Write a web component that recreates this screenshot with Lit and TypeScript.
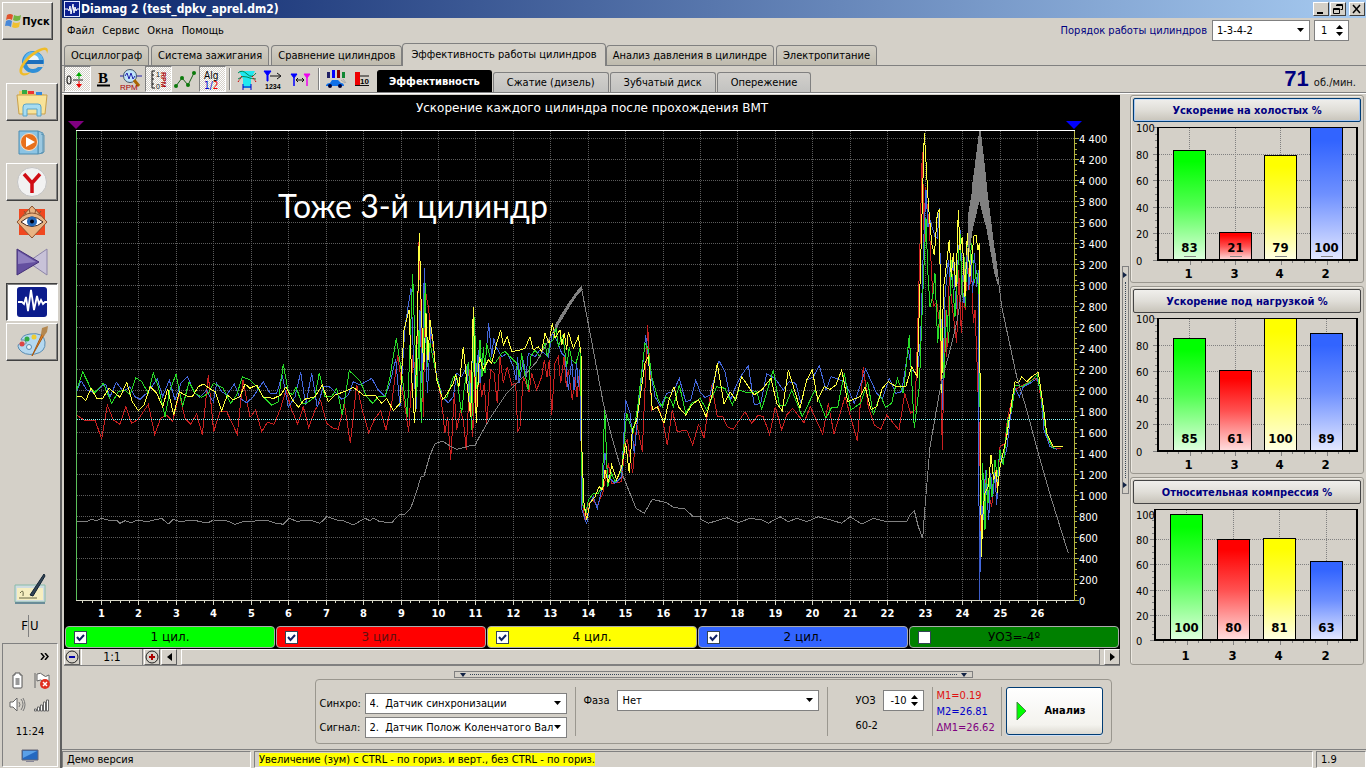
import { LitElement, html, svg, css, nothing } from "lit";
import { customElement, property } from "lit/decorators.js";
import { classMap } from "lit/directives/class-map.js";

const base = css`
  * { box-sizing: border-box; }
  button, select, input { font: inherit; color: inherit; margin: 0; padding: 0; border-radius: 0; }
  svg { display: block; }
`;

/* Each trace block: origin of the block, then samples at three units per pixel. */
type Block = [number, number, string];
const plot = (blocks: Block[]) =>
  blocks
    .map(([ox, oy, pts]) =>
      pts.trim().split(/\s+/).map((p) => {
        const [x, y] = p.split(",").map(Number);
        return `${(ox + x / 3).toFixed(1)},${(oy + y / 3).toFixed(1)}`;
      }).join(" ")
    )
    .join(" ");

const GREEN = plot([
  [70, 210, "20,540 38,485 60,530 75,548 100,520 125,580 145,545 165,540 180,555 197,503 215,515 235,550 250,490 265,530 285,620 300,540 318,493 338,590 357,515 375,550 395,562 415,550 430,520 460,535 482,580 500,555 517,500 540,510 560,530 580,560 605,585 625,575 640,463 655,545 668,555 678,530 695,580 710,580 735,560 748,488 765,560 785,560 800,535 817,615 838,482 870,512 890,560 908,580 925,560 945,560 960,500 979,385 995,490 1012,620 1028,193 1040,560 1047,360 1054,640 1066,220 1072,470 1080,400 1100,500 1118,568 1132,560"],
  [420, 210, "100,500 110,495 118,560 125,610 132,540 145,455 155,660 163,320 172,560 180,390 186,500 190,410 195,490 200,400 212,450 225,460 245,430 255,425 270,440 290,460 298,500 305,430 312,480 325,540 332,440 345,420 360,440 375,400 382,440 390,400 400,390 408,350 415,410 428,375 440,470 448,410 455,450 468,460 480,415 484,600 487,880 498,910 505,870 520,850 535,850 547,830 554,590 563,830 575,790 585,815 605,780 620,610 632,650 640,665 652,600 675,400 685,420 695,500 715,570 727,590 737,560 752,570 760,590 778,525 797,610 815,580 835,570"],
  [700, 300, "0,295 20,330 50,260 75,265 97,315 117,270 140,278 170,275 185,328 220,210 238,315 257,315 275,270 307,350 345,270 378,355 395,322 413,322 433,220 452,330 482,310 503,245 520,345 540,285 557,322 575,310 592,235 610,280 628,105 643,385"],
  [880, 110, "118,830 128,560 138,325 143,480 150,590 158,560 165,490 173,700 180,600 192,805 200,600 206,700 213,450 225,620 232,500 240,370 247,560 252,440 256,590 262,380 268,470 275,400 283,520 290,480 298,560 302,1210 308,1060 315,1260 319,1080 324,1180 330,1100 336,1160 345,1050 352,1100 360,1020 370,1065 383,930 395,900 405,825 425,830 450,815 472,795 485,870 497,965 515,1010 525,1015"],
]);
const RED = plot([
  [70, 210, "20,615 45,632 76,632 95,688 112,585 130,630 150,643 167,590 185,640 205,628 235,583 254,673 272,625 290,615 308,633 328,550 345,625 362,642 380,612 397,675 415,495 431,665 450,605 470,605 502,673 519,510 540,622 557,600 575,665 592,637 612,643 630,600 648,540 665,600 683,642 700,590 716,653 735,600 752,573 770,640 790,655 805,658 823,580 841,700 860,525 878,605 896,668 915,625 932,603 948,660 965,580 983,435 1000,560 1016,665 1030,420 1038,560 1047,97 1056,430 1060,620 1066,240 1075,290 1085,380 1100,500 1112,560 1120,620"],
  [420, 210, "74,670 83,620 92,750 103,550 110,660 122,600 131,640 139,720 150,480 158,680 166,480 170,600 177,480 185,560 193,520 200,640 212,480 222,490 232,580 240,440 250,520 262,470 275,525 287,520 293,665 300,650 310,500 327,545 335,490 350,540 365,500 373,450 381,500 388,450 395,615 405,460 415,440 422,520 432,440 439,530 445,480 457,570 465,500 471,560 478,490 482,590 485,860 495,930 505,880 520,870 530,890 548,850 565,760 575,820 605,815 615,700 622,690 638,790 650,640 667,725 683,345 695,600 715,590 728,630 742,705 757,600 772,665 800,660 818,705 835,645"],
  [700, 300, "0,380 12,415 35,255 52,350 68,350 82,380 100,388 135,335 155,370 175,345 190,350 209,405 226,320 245,390 260,345 278,325 312,368 331,320 368,403 385,310 402,403 435,290 472,423 490,200 505,320 523,375 542,388 560,345 597,390 614,280 632,340 645,330"],
  [880, 110, "112,700 119,440 127,125 133,400 136,230 148,350 160,590 170,575 180,650 187,1020 195,600 200,740 208,500 219,610 230,700 236,480 244,670 250,560 256,600 262,440 268,540 275,480 280,640 285,600 292,780 299,1000 303,1280 315,1110 325,1150 335,1190 345,1080 352,1140 360,1010 375,1000 382,930 400,850 412,835 430,825 465,805 475,815 485,880 500,980 520,1015 543,1015"],
]);
const YELLOW = plot([
  [70, 210, "20,558 33,558 47,572 63,535 80,565 98,565 117,535 150,562 170,517 187,575 205,602 222,585 240,530 260,550 278,590 293,537 311,615 328,545 350,558 368,558 385,530 400,522 418,535 436,545 455,602 472,555 490,570 510,560 525,522 540,535 560,525 580,562 612,565 632,555 648,530 668,570 685,592 703,568 735,560 757,525 775,575 795,555 830,542 850,532 880,555 915,555 935,580 950,565 970,602 990,580 1002,360 1017,300 1026,520 1034,640 1040,420 1048,70 1054,300 1061,480 1068,310 1074,450 1080,330 1090,400 1100,510 1118,568"],
  [420, 210, "72,565 85,545 100,520 107,495 117,530 130,410 142,530 152,620 160,292 165,500 169,640 178,440 190,480 205,450 215,460 230,400 242,360 250,405 262,380 275,425 300,420 315,415 330,380 340,420 355,410 365,425 375,370 387,400 397,340 405,385 420,360 425,405 433,370 440,420 445,365 460,415 475,380 483,430 485,700 492,880 500,930 510,880 525,860 537,830 548,840 555,780 565,820 575,765 590,810 605,770 617,700 628,790 637,660 650,630 662,550 675,460 685,440 697,600 712,590 732,640 747,570 762,530 775,590 797,615 815,585 835,570"],
  [700, 300, "0,310 18,350 35,290 52,190 72,313 90,275 107,300 125,230 162,285 185,270 213,235 230,310 247,333 265,210 300,325 320,240 337,210 353,300 372,260 390,268 408,255 425,210 443,305 480,290 495,260 513,328 530,320 547,265 565,245 585,258 618,258 635,200 652,230"],
  [880, 110, "122,450 133,68 139,170 145,280 155,400 163,435 167,380 172,310 178,300 185,850 190,540 195,500 208,390 214,500 220,430 228,530 235,300 240,420 247,380 255,560 262,370 270,500 275,440 282,378 288,375 294,420 298,400 300,790 304,1340 310,1190 315,1150 325,1130 333,1035 341,1110 350,1080 352,1150 360,1070 380,980 393,890 405,815 415,820 425,800 440,815 455,800 475,787 490,890 500,970 520,1010 548,1010"],
]);
const BLUE = plot([
  [70, 210, "20,545 33,512 50,540 75,550 92,530 107,522 120,560 139,517 160,545 180,530 195,560 210,568 235,545 262,507 278,560 298,510 315,570 333,520 352,500 375,550 390,562 410,540 420,560 430,575 440,520 455,545 470,555 493,522 510,565 530,578 550,560 580,515 600,550 620,550 637,495 655,592 675,560 692,487 707,585 725,490 742,592 760,530 778,530 795,545 815,568 835,555 850,515 870,525 905,505 925,540 945,560 960,520 977,447 990,590 1005,350 1023,235 1030,430 1038,600 1050,300 1056,520 1063,175 1068,400 1072,550 1083,350 1100,500 1115,550"],
  [420, 210, "65,560 85,578 100,560 110,490 125,500 140,470 150,580 157,440 163,370 169,520 175,420 180,520 185,450 195,470 206,340 215,440 221,385 228,410 245,440 262,430 280,470 288,510 293,440 297,520 310,450 318,500 325,430 345,440 360,420 385,440 397,370 410,390 425,430 435,440 445,540 455,450 462,540 470,460 475,530 480,480 486,900 500,942 510,880 520,860 532,895 547,830 555,730 565,800 585,820 605,800 617,570 630,610 643,730 655,600 677,375 690,480 705,560 722,590 740,550 760,545 778,505 797,575 812,570 827,510"],
  [700, 300, "0,275 15,293 30,285 57,182 75,215 92,300 107,260 125,225 145,197 163,315 182,310 200,222 225,235 250,270 267,245 287,250 303,310 320,240 340,230 358,197 378,270 393,230 435,245 463,310 497,208 530,280 547,297 568,235 587,280 605,275 625,150 635,210 652,225"],
  [880, 110, "122,680 130,420 138,240 144,350 150,330 165,380 172,385 178,295 183,620 187,900 195,560 205,450 212,520 220,440 228,600 234,450 240,360 248,540 252,580 262,440 266,540 272,450 278,550 283,430 290,530 295,480 298,1470 305,1180 311,1230 316,1080 326,1230 332,1090 338,1160 345,1090 350,1185 358,1030 366,1060 380,1020 390,930 405,835 418,860 430,830 450,820 472,805 482,850 492,960 510,1010 530,1018"],
]);
const RPM = plot([
  [70, 210, "20,935 50,935 65,928 80,932 95,925 120,932 140,930 150,940 165,932 185,938 200,930 230,935 275,925 295,942 310,928 330,935 370,930 395,936 415,938 430,930 470,932 495,943 520,935 570,932 590,930 610,938 640,943 658,925 680,934 720,930 750,940 770,920 800,930 820,932 850,945 885,925 900,932 910,925 930,935 965,938 990,912 1005,912 1022,895 1038,850 1053,800 1062,798 1080,735 1095,702 1117,693 1140,708 1160,718 1185,712 1205,705 1215,708"],
  [420, 210, "170,695 210,625 260,550 310,500 350,455 400,365 484,232 495,290 515,395 550,580 575,680 610,800 648,895 673,910 697,868 740,878 760,892 795,897 820,920 840,920"],
  [700, 300, "0,657 25,670 50,662 80,653 115,668 150,655 185,660 205,670 240,650 265,665 290,655 320,665 355,650 400,662 425,670 450,650 485,672 520,655 560,665 620,665 630,645 643,632 655,680 668,715 675,620 690,440 725,240"],
  [880, 110, "208,730 232,630 262,430 298,160 345,430 365,590 410,800 440,900 475,1030 515,1170 565,1330"],
]);
const RPM_PEAK = plot([[880, 110, "298,60 302,60 315,170 322,240 338,370 345,430 355,530 343,490 320,360 298,275 278,360 262,470 265,310 275,250 275,235 284,170"]]);
const RPM_RIDGE = plot([[420, 210, "405,345 425,310 445,280 465,250 484,228 488,240 470,258 450,288 425,330 405,362"]]);

@customElement("trace-chart")
class TraceChart extends LitElement {
  static styles = [base, css`
    :host { display: block; background: #000; }
    svg { width: 100%; height: auto; }
    .axis { font: 11px "DejaVu Sans Condensed", "DejaVu Sans", sans-serif; fill: #fff; }
    .num { font: bold 11px "DejaVu Sans Condensed", "DejaVu Sans", sans-serif; fill: #fff; text-anchor: middle; }
    .title { font: 12px "DejaVu Sans", sans-serif; fill: #fff; text-anchor: middle; }
    .note { font: 32px "Lato", "Noto Sans", sans-serif; fill: #fff; }
    .trace { fill: none; stroke-width: 1; }
    .grid { stroke: #5c5c5c; stroke-dasharray: 1 1; }
  `];
  render() {
    const secs = Array.from({ length: 26 }, (_, i) => i + 1);
    const levels = Array.from({ length: 23 }, (_, i) => i * 200);
    const sx = (s: number) => Math.round(101 + (s - 1) * 37.44) + 0.5;
    const ly = (v: number) => 600.5 - v * 0.105;
    const fmt = (v: number) => (v >= 1000 ? `${Math.floor(v / 1000)} ${String(v % 1000).padStart(3, "0")}` : `${v}`);
    return html`<svg viewBox="64 95 1056 530" role="img" aria-label="Ускорение каждого цилиндра после прохождения ВМТ">
      <text class="title" x="592" y="112">Ускорение каждого цилиндра после прохождения ВМТ</text>
      <g shape-rendering="crispEdges">
        ${secs.map((s) => svg`<line class="grid" x1=${sx(s)} x2=${sx(s)} y1="131" y2="600"></line>`)}
        ${levels.slice(1).map((v) => svg`<line class="grid" x1="77" x2="1074" y1=${ly(v)} y2=${ly(v)}></line>`)}
        <polygon points=${RPM_PEAK} fill="#808080"></polygon>
        <polygon points=${RPM_RIDGE} fill="#808080"></polygon>
        <polyline class="trace" points=${RED} stroke="#c82020"></polyline>
        <polyline class="trace" points=${BLUE} stroke="#4468dc"></polyline>
        <polyline class="trace" points=${GREEN} stroke="#28dc28"></polyline>
        <polyline class="trace" points=${YELLOW} stroke="#ffff40"></polyline>
        <polyline class="trace" points=${RPM} stroke="#808080"></polyline>
        <line x1="979.5" x2="979.5" y1="540" y2="600" stroke="#3c5cc8"></line>
        <line x1="77" x2="1074" y1="419.5" y2="419.5" stroke="#8ff" stroke-dasharray="1 1"></line>
        <path d="M76 130.5H1075" stroke="#fff"></path>
        <path d="M76.5 131V600" stroke="#5ac05a"></path>
        <path d="M76 600.5H1075" stroke="#d8d8c8"></path>
        <path d="M1074.5 131V601" stroke="#b4b440"></path>
        ${levels.map((v) => svg`<line x1="1074" x2="1079" y1=${ly(v)} y2=${ly(v)} stroke="#b4b440"></line>`)}
        ${levels.slice(0, 22).map((v) => [50, 100, 150].map((d) => svg`<line x1="1074" x2="1077" y1=${ly(v + d)} y2=${ly(v + d)} stroke="#b4b440"></line>`))}
        ${secs.map((s) => svg`<line x1=${sx(s)} x2=${sx(s)} y1="601" y2="605" stroke="#d8d8c8"></line>`)}
        ${[0, ...secs].map((s) => [0.25, 0.5, 0.75].filter((d) => s + d > 0.4).map((d) => svg`<line x1=${sx(s + d)} x2=${sx(s + d)} y1="601" y2="603" stroke="#d8d8c8"></line>`))}
      </g>
      ${levels.map((v) => svg`<text class="axis" x="1079" y=${ly(v) + 4}>${fmt(v)}</text>`)}
      ${secs.map((s) => svg`<text class="num" x=${sx(s)} y="617">${s}</text>`)}
      <path d="M68 121H84L76 129Z" fill="#800080"></path>
      <path d="M1066 121H1082L1074 129Z" fill="#00f"></path>
      <text class="note" x="278" y="218">Тоже 3-й цилиндр</text>
    </svg>`;
  }
}

const FILLS: Record<string, [string, string, string]> = {
  "1": ["#00ff00", "#50ff50", "#e0ffe0"], "3": ["#ff0000", "#ff5050", "#ffe0e0"], "4": ["#ffff00", "#ffff50", "#ffffe4"], "2": ["#3264ff", "#6e90ff", "#e4e8ff"],
};

@customElement("bar-panel")
class BarPanel extends LitElement {
  @property() heading = "";
  @property({ type: Array }) values: number[] = [];
  @property({ type: Number }) full = 4;
  @property({ type: Number }) left = 24;
  @property({ type: Number }) bottom = 137;
  @property({ type: Boolean }) focused = false;
  @property({ type: Boolean }) marks = false;
  static styles = [base, css`
    :host { display: block; border: 1px solid #9a978f; border-radius: 3px; padding: 2px; box-shadow: inset 1px 1px #ece9e2; }
    svg { width: 100%; height: auto; }
    button { display: block; width: 100%; height: 24px; border: 1px solid #444; border-radius: 2px; color: #000080;
      background: linear-gradient(#f0efec, #e0ded8 50%, #c8c4ba); font: bold 11px "DejaVu Sans Condensed", "DejaVu Sans", sans-serif; }
    .focused { border-color: #003c74; box-shadow: inset 1px 0 #a8c8f0, inset -1px 0 #a8c8f0, inset 0 1px #cde0f8, inset 0 -1px #a8c8f0; }
    .axis { font: 11px "DejaVu Sans Condensed", "DejaVu Sans", sans-serif; }
    .val { font: bold 13px "DejaVu Sans Condensed", "DejaVu Sans", sans-serif; text-anchor: middle; }
  `];
  render() {
    const ids = ["1", "3", "4", "2"];
    const L = this.left, R = 225, B = this.bottom, step = (B - this.full) / 100;
    const y = (v: number) => Math.round(B - v * step) + 0.5;
    const pitch = (193 - L - 32) / 3;
    const cx = (i: number) => Math.round(L + 32 + i * pitch) + 0.5;
    return html`
      <button class=${classMap({ focused: this.focused })}>${this.heading}</button>
      <svg viewBox="0 -1 228 158" role="img" aria-label=${this.heading}>
        <defs>${ids.map((id) => svg`<linearGradient id="g${id}" x2="0" y2="1"><stop offset="0.1" stop-color=${FILLS[id][0]}></stop><stop offset="0.5" stop-color=${FILLS[id][1]}></stop><stop offset="1" stop-color=${FILLS[id][2]}></stop></linearGradient>`)}</defs>
        <g shape-rendering="crispEdges" fill="none">
          ${[20, 40, 60, 80].map((v) => svg`<path d="M${L} ${y(v)}H${R}" stroke="#808080" stroke-dasharray="1 1"></path>`)}
          ${ids.map((_, i) => svg`<path d="M${cx(i)} 5V${B}" stroke="#808080" stroke-dasharray="1 1"></path>`)}
          ${Array.from({ length: 21 }, (_, i) => svg`<path d="M${L - (i % 4 ? 2 : 4)} ${y(i * 5)}H${L}" stroke="#808080"></path>`)}
          ${Array.from({ length: 17 }, (_, i) => svg`<path d="M${Math.round(cx(0) + (i - 2) * pitch / 4) + 0.5} ${B}v${i % 4 === 2 ? 5 : 3}" stroke="#808080"></path>`)}
          <path d="M${L} 4.5H${R}" stroke="#000"></path>
          ${ids.map((id, i) => svg`<rect x=${cx(i) - 16} y=${y(this.values[i])} width="32" height=${B - y(this.values[i])} fill="url(#g${id})" stroke="#000"></rect>`)}
          <path d="M${L + 1} 4V${B}H${R - 1}V4" stroke="#000" stroke-width="2"></path>
          ${this.marks ? ids.map((_, i) => svg`<path d="M${cx(i) - 6} ${B - 3.5}h12" stroke="#888"></path>`) : nothing}
        </g>
        ${[0, 20, 40, 60, 80, 100].map((v) => svg`<text class="axis" x="3" y=${y(v) + 4}>${v}</text>`)}
        ${ids.map((id, i) => svg`<text class="val" x=${cx(i)} y=${B - 8}>${this.values[i]}</text><text class="val" x=${cx(i) - 1} y="155">${id}</text>`)}
      </svg>`;
  }
}

const dropIcon = html`<svg class="drop" width="9" height="5" aria-hidden="true"><path d="M1 0H8L4.500 4Z"></path></svg>`;

const toolIcons = [
  { name: "Ноль", on: true, g: svg`<path d="M4 9q-2 0-2 4t2 4 2-4-2-4Z" fill="none" stroke="#222" stroke-width="1.200"/><path d="M8 13h10" stroke="#222"/><path d="M14 5l-3 4h6Z" fill="#0a0"/><path d="M14 8v4" stroke="#0a0"/><path d="M14 21l-3-4h6Z" fill="#e00"/><path d="M14 14v4" stroke="#e00"/>` },
  { name: "Толщина линий", g: svg`<text x="6" y="16" font-family="Liberation Serif, serif" font-weight="bold" font-size="15">B</text><path d="M5 18.500h13" stroke="#000" stroke-width="2"/>` },
  { name: "Обороты", g: svg`<path d="M1 9h4m13 0h5" stroke="#22a"/><circle cx="11" cy="9" r="6.500" fill="#bfe4fa" stroke="#456"/><path d="M6 9l2-3 2 6 2-6 2 6 2-3" fill="none" stroke="#22a"/><path d="M15 13l5 6" stroke="#a60" stroke-width="3"/><text x="1" y="23" font-family="Liberation Sans, sans-serif" font-size="8" fill="#a00">RPM</text>` },
  { name: "Шкала RPM", on: true, g: svg`<path d="M9 4H6v17h3M6 8h2M6 12h2M6 17h2" fill="none" stroke="#111"/><text x="10" y="10" font-family="Liberation Sans, sans-serif" font-size="7" fill="#111">1</text><text x="10" y="22" font-family="Liberation Sans, sans-serif" font-size="7" fill="#111">0</text><text transform="translate(15 5) rotate(90)" font-family="Liberation Sans, sans-serif" font-size="7" font-weight="bold" fill="#a00">RPM</text>` },
  { name: "Точки", g: svg`<path d="M3 19L9 11l6 7 6-12" fill="none" stroke="#186018"/><g fill="#0a7a0a"><circle cx="3" cy="19" r="2"/><circle cx="9" cy="11" r="2"/><circle cx="15" cy="18" r="2"/><circle cx="21" cy="6" r="2"/></g>` },
  { name: "Алгоритм", on: true, g: svg`<text x="4" y="12" font-family="DejaVu Sans Condensed, sans-serif" font-size="10">Alg</text><text x="4" y="22" font-family="DejaVu Sans Condensed, sans-serif" font-size="10" fill="#00c">1/<tspan fill="#e00">2</tspan></text>` },
  null,
  { name: "Синхронизация", g: svg`<path d="M4 4h16l-4 8v9H8v-9Z" fill="#20e8f0"/><path d="M3 6q4-4 9 1t9-1M3 12q5-4 9-2t9 2" fill="none" stroke="#085"/><path d="M3 15l4-6m14 6l-4-6" stroke="#c00" stroke-dasharray="2 1"/><path d="M8 17v6m8-6v6M8 20h8" stroke="#00c"/>` },
  { name: "Порядок", g: svg`<path d="M2 4h7L6 8v6H5V8Z" fill="#00f" stroke="#00f"/><path d="M8 9h10m-3-3l4 3-4 3" fill="none" stroke="#111"/><text x="3" y="22" font-family="Liberation Sans, sans-serif" font-size="7" font-weight="bold">1234</text>` },
  { name: "Маркеры", g: svg`<path d="M2 7h6L5 11v8V11Z" fill="#00f" stroke="#00f"/><path d="M15 7h6l-3 4v8V11Z" fill="#e0e" stroke="#e0e"/><path d="M7 13h8m-6-2l-2 2 2 2m4-4l2 2-2 2" fill="none" stroke="#111"/>` },
  null,
  { name: "Разгон", g: svg`<path d="M3 5h3v6H3Z" fill="#226"/><path d="M8 3h3v8H8Z" fill="#00f"/><path d="M13 3h3v8h-3Z" fill="#800"/><path d="M18 5h3v6h-3Z" fill="#183"/><path d="M2 18q1-2 4-2l2-3h6l3 3q3 0 3 3H2Z" fill="#1070e8"/><circle cx="6" cy="19" r="2" fill="#003"/><circle cx="16" cy="19" r="2" fill="#003"/><path d="M17 13l4 3m-2-4l3 4" stroke="#aaa"/>` },
  { name: "Гистограмма", g: svg`<path d="M4 5h5v13H4Z" fill="#e00"/><path d="M9 9h9M4 18.500h14" stroke="#111"/><text x="9" y="17" font-family="Liberation Sans, sans-serif" font-size="8" font-weight="bold">10</text>` },
];

const taskIcons = [
  { name: "Internet Explorer", s: "", g: svg`<circle cx="17" cy="16" r="11" fill="#2f8fd8"/><path d="M7 17h20q1-9-8-11T7 15Z" fill="#5fb8f0"/><path d="M11 14h12q-1-5-6-5t-6 5Z" fill="#eef6fb"/><path d="M11 18h17l-1 3h-5q-2 2-5 2-5 0-6-5Z" fill="#d4d0c8"/><path d="M9 14h18v4H9Z" fill="#1c6fbd"/><path d="M6 29C-2 26 10 7 26 2q8-2 5 6 0-6-6-3C13 10 3 24 7 27q3 1 8-1-5 5-9 3Z" fill="#f0bc28"/>` },
  { name: "Проводник", s: "up", g: svg`<path d="M3 5h9l2 3h14v20H3Z" fill="#eec96a"/><path d="M1 9h30l-2 19H3Z" fill="#f8e39a" stroke="#c9a04a"/><path d="M6 4h5v4H6Z" fill="#3a4"/><path d="M12 5h6v3h-6Z" fill="#e33"/><path d="M20 6h6v3h-6Z" fill="#38d"/><path d="M7 30V21q0-3 3-3h12q3 0 3 3v9h-4v-7H11v7Z" fill="#a6dcf2" stroke="#5aa4c8"/>` },
  { name: "Проигрыватель", s: "", g: svg`<path d="M22 5l5 2v20l-5 1Z" fill="#9cc8e0" stroke="#5a94b4"/><path d="M25 8l3 1v17l-3 1" fill="none" stroke="#5a94b4"/><path d="M3 5h19v23H3Z" fill="#8cc4e4" stroke="#4c8cb0"/><circle cx="13" cy="16" r="8.500" fill="#e8701c" stroke="#f8e0c8"/><path d="M10 11l9 5-9 5Z" fill="#fff"/>` },
  { name: "Яндекс", s: "up", g: svg`<circle cx="16" cy="16" r="14.500" fill="#f2f2f2" stroke="#c4c4c4"/><path d="M8 8l8 9 8-9M16 17v10" fill="none" stroke="#d00c14" stroke-width="3.500"/>` },
  { name: "Просмотр изображений", s: "", g: svg`<path d="M3 3h26v26H3Z" fill="#f04820"/><path d="M16 0l15 16-15 16L1 16Z" fill="#e8b484" stroke="#8a5230"/><path d="M5 16q11-10 22 0-11 9-22 0Z" fill="#fff" stroke="#3a2018"/><circle cx="16" cy="15.500" r="5" fill="#2468b8"/><circle cx="16" cy="15.500" r="2" fill="#001"/><path d="M7 10q9-6 18 0M10 8l-2-3m6 2l-1-4m6 4l1-4m3 5l2-3" fill="none" stroke="#8a5230"/>` },
  { name: "KMPlayer", s: "", g: svg`<path d="M31 3v26L12 16Z" fill="#c8c2d8" stroke="#8c84a8"/><path d="M1 3l22 13L1 29Z" fill="#6450a0" stroke="#453078"/><path d="M2 5l18 11-18 2Z" fill="#9080c0"/>` },
  { name: "Diamag", s: "down", g: svg`<rect x="1" y="1" width="30" height="30" rx="3" fill="#0c1c8c"/><path d="M2 16h4l2 2 2-7 2 14 3-21 3 20 3-14 2 8 2-4 2 4 2-2h2" fill="none" stroke="#fff" stroke-width="1.800"/>` },
  { name: "Paint", s: "up", g: svg`<path d="M14 8q14-2 15 8t-10 12-16-5q-3-6 3-5 5 1 4-2T5 14q1-5 9-6Z" fill="#b4d8f0" stroke="#5a8cb0"/><circle cx="6" cy="18" r="2.500" fill="#d44"/><circle cx="11" cy="13" r="2.500" fill="#3a4"/><circle cx="18" cy="11" r="2.500" fill="#ec3"/><circle cx="13" cy="21" r="2.500" fill="#e8f0f4" stroke="#5a8cb0"/><path d="M16 30L26 8l2 1Z" fill="#e08428" stroke="#a85a14"/><path d="M25 8l1-6 6-2-1 6-3 4Z" fill="#b48850"/>` },
];

const logo = (n: number) => html`<svg width=${n} height=${n} viewBox="0 0 16 16" aria-hidden="true"><rect x=".5" y=".5" width="15" height="15" fill="#0c2090" stroke="#dfe6ff"></rect><path d="M1 8h3l1 2 1-5 1 8 2-10 1 9 1-6 1 4 1-2h2" fill="none" stroke="#fff"></path></svg>`;

@customElement("task-bar")
class TaskBar extends LitElement {
  static styles = [base, css`
    :host { display: flex; flex-direction: column; align-items: center; padding: 2px 0 1px; background: #d4d0c8; }
    button { display: flex; align-items: center; justify-content: center; background: #d4d0c8; border: 1px solid transparent; }
    .start { align-self: stretch; height: 38px; margin: 0 7px 3px 2px; border-color: #fff #404040 #404040 #fff; box-shadow: inset -1px -1px #808080;
      font: bold 11px "DejaVu Sans Condensed", "DejaVu Sans", sans-serif; }
    .apps { display: flex; flex-direction: column; gap: 2px; width: 52px; margin-left: 4px; }
    .apps button { height: 38px; border-width: 1px; }
    .apps .up { border-color: #fff #404040 #404040 #fff; box-shadow: inset -1px -1px #808080; }
    .apps .down { background: #fff; border-color: #404040 #fff #fff #404040; box-shadow: inset 1px 1px #808080; }
    .spacer { flex: 1; }
    .lang { display: flex; height: 26px; align-items: center; margin: 8px 0 4px; font-size: 13px; }
    .lang span + span { border-left: 1px solid #808080; padding-left: 1px; line-height: 22px; }
    .tray { align-self: stretch; margin: 0 2px; height: 124px; border: 1px solid; border-color: #808080 #fff #fff #808080; display: flex; flex-direction: column; align-items: center; padding-top: 9px; }
    .more { align-self: flex-end; margin-right: 8px; }
    .pair { display: flex; gap: 6px; height: 24px; align-items: center; }
    .more + .pair { margin-top: 9px; }
    .clock { margin: 8px 0 10px; line-height: 14px; }
  `];
  render() {
    return html`
      <button class="start"><svg width="17" height="16" viewBox="0 0 17 16" aria-hidden="true"><path d="M2 2q3-2 6 0L7 7Q4 5 1 7Z" fill="#e0532c"/><path d="M9 2q4 2 7 0l-1 5q-4 2-7 0Z" fill="#74b440"/><path d="M1 8q3-2 6 0l-1 6q-3-2-6-1Z" fill="#4888d8"/><path d="M8 9q3 2 7 0l-1 5q-4 2-7 0Z" fill="#f0c030"/></svg>Пуск</button>
      <div class="apps">${taskIcons.map((t) => html`<button class=${t.s} aria-label=${t.name}><svg width="32" height="32" viewBox="0 0 32 32">${t.g}</svg></button>`)}</div>
      <div class="spacer"></div>
      <svg width="34" height="32" viewBox="0 0 34 32" aria-hidden="true"><path d="M2 12h30v17H2Z" fill="#cfdce0" stroke="#8ba"/><path d="M4 15h26v12H4Z" fill="#f6eec0"/><path d="M2 29h30v2H2Z" fill="#6a8c98"/><path d="M7 20q4-5 3 3m-4 2h18" fill="none" stroke="#664"/><path d="M17 22L31 1l1 2-12 20Z" fill="#345" stroke="#123"/></svg>
      <div class="lang"><span>F</span><span>U</span></div>
      <div class="tray">
        <svg class="more" width="9" height="7" aria-hidden="true"><path d="M1 0l3 3.500-3 3.500M5 0l3 3.500L5 7" fill="none" stroke="#000" stroke-width="1.500"/></svg>
        <div class="pair">
          <svg width="18" height="18" aria-hidden="true"><path d="M6 1h5v2h2v12q0 1-1 1H5q-1 0-1-1V3h2Z" fill="#fff" stroke="#555"/><path d="M6.500 6h4v7h-4Z" fill="#999"/></svg>
          <svg width="18" height="18" aria-hidden="true"><path d="M2 1v15M4 2q4-2 6 1t6 0v7q-4 1-6-1t-6 0Z" fill="#fff" stroke="#666"/><circle cx="12" cy="12" r="5" fill="#e03020"/><path d="M10 10l4 4m0-4l-4 4" stroke="#fff" stroke-width="1.500"/></svg>
        </div>
        <div class="pair">
          <svg width="18" height="18" aria-hidden="true"><path d="M1 6h3l4-4v13l-4-4H1Z" fill="#fff" stroke="#666"/><path d="M10 6q2 3 0 5m2-8q4 5 0 11m2-12q4 7 0 13" fill="none" stroke="#777"/></svg>
          <svg width="18" height="18" aria-hidden="true"><g fill="#fff" stroke="#666"><path d="M1.500 13h2v2h-2ZM4.500 11h2v4h-2ZM7.500 9h2v6h-2ZM10.500 6h2v9h-2ZM13.500 4h2v11h-2Z"/></g></svg>
        </div>
        <span class="clock">11:24</span>
        <svg width="18" height="14" aria-hidden="true"><path d="M1 1h16v10H1Z" fill="#2468c0" stroke="#667"/><path d="M2 2h14L2 9Z" fill="#5aa0e8"/><path d="M5 12h8v1H5Z" fill="#889"/></svg>
      </div>`;
  }
}

@customElement("app-root")
class AppRoot extends LitElement {
  static styles = [base, css`
    :host { display: grid; grid-template-columns: 60px minmax(0, 1fr); min-height: 100vh; background: #d4d0c8; color: #000;
      font: 11px/14px "DejaVu Sans Condensed", "DejaVu Sans", sans-serif; white-space: nowrap; }
    .window { display: flex; flex-direction: column; border-left: 2px solid #606060; min-width: 0; }
    .titlebar { display: flex; align-items: center; height: 18px; padding: 0 1px 0 2px; gap: 1px; color: #fff; background: linear-gradient(90deg, #0a246a, #a6caf0); }
    .titlebar h1 { margin: 0; font: bold 12px/16px "DejaVu Sans Condensed", "DejaVu Sans", sans-serif; }
    .push { flex: 1; }
    .titlebar button { width: 16px; height: 14px; background: #d4d0c8; border: 1px solid; border-color: #fff #404040 #404040 #fff; }
    .titlebar button:last-child { margin-left: 2px; }
    .menu { display: flex; align-items: center; height: 25px; padding: 0 17px 0 5px; gap: 8px; }
    .menu a { color: #000; text-decoration: none; }
    .menu label { color: #000080; }
    .field { display: flex; align-items: center; position: relative; background: #fff; border: 1px solid #808080; height: 21px; }
    .field select { appearance: none; width: 100%; height: 100%; border: 0; background: transparent; padding: 0 12px 0 4px; outline: 0; }
    .drop { position: absolute; right: 4px; pointer-events: none; }
    .spin input { width: 100%; height: 100%; border: 0; background: transparent; padding: 0 16px 0 6px; outline: 0; }
    .spin div { position: absolute; right: 4px; display: flex; flex-direction: column; gap: 3px; }
    .spin button { border: 0; background: none; display: block; width: 9px; height: 5px; line-height: 0; }
    .order { width: 98px; margin-left: -3px; }
    .cyl { width: 35px; margin-left: -4px; }
    .tabs { display: flex; align-items: flex-end; gap: 2px; height: 23px; padding-left: 2px; border-bottom: 1px solid #808080; }
    .tabs button { height: 20px; padding: 0 6px; border: 1px solid #808080; border-bottom: 0; border-radius: 4px 4px 0 0; background: linear-gradient(#d2cec4, #bfbbae); }
    .tabs .active { height: 23px; margin: 0 -2px -1px; padding: 0 8px 1px; background: #d4d0c8; box-shadow: 0 1px #d4d0c8; }
    .toolbar { display: flex; align-items: stretch; height: 27px; padding: 0 10px 0 2px; border-bottom: 1px solid #808080; }
    .tool { width: 27px; border: 1px solid transparent; background: none; display: grid; place-items: center; }
    .tool.on { border-color: #808080 #fff #fff #808080; background: repeating-conic-gradient(#fff 0 25%, #d4d0c8 0 50%) 0 0 / 2px 2px; }
    .sep { width: 2px; margin: 2px 3px; background: #808080; border-right: 1px solid #fff; }
    .sub { display: flex; align-items: flex-end; gap: 1px; flex: 1; }
    .sub button { height: 20px; padding: 0 13px; border: 1px solid #808080; border-bottom: 0; border-radius: 3px 3px 0 0; background: linear-gradient(#d2d0cc, #c2c2c0); }
    .sub .active { height: 22px; padding: 0 11px; background: #000; color: #fff; font-weight: bold; border-color: #000; }
    .rpm { display: flex; align-items: baseline; gap: 5px; color: #111; }
    .rpm b { color: #000080; font: bold 22px/26px "Liberation Sans", sans-serif; }
    .work { display: grid; grid-template-columns: minmax(0, 1056fr) 10px minmax(0, 234fr); padding: 1px 2px 0 2px; align-items: start; border-top: 1px solid #fff; }
    .series { display: grid; grid-template-columns: repeat(5, minmax(0, 1fr)); background: #000; padding: 1px; gap: 1px; }
    .series label { display: flex; align-items: center; height: 22px; padding: 0 21px 0 8px; border: 1px solid #aaa; border-radius: 4px; font: 12px "DejaVu Sans", sans-serif; }
    .series span { flex: 1; text-align: center; }
    .series input { appearance: none; width: 13px; height: 13px; background: #fff; border: 1px solid #345; display: block; flex: none; }
    .series input:checked { background: #fff url("data:image/svg+xml,%3Csvg xmlns='http://www.w3.org/2000/svg' viewBox='0 0 11 11'%3E%3Cpath d='M2 5l2.500 3L9 3' fill='none' stroke='%23126' stroke-width='2'/%3E%3C/svg%3E"); }
    .c1 { background: #00ff00; } .c3 { background: #ff0000; color: #601010; } .c4 { background: #ffff00; } .c2 { background: #3264ff; } .c0 { background: #008000; }
    .scroll { display: flex; height: 17px; gap: 1px; border-bottom: 1px solid #808080; }
    .scroll button { width: 16px; display: grid; place-items: center; border: 1px solid; border-color: #fff #606060 #606060 #fff; background: #d4d0c8; }
    .zoom { width: 62px; text-align: center; font-size: 12px; border-right: 1px solid #808080; border-left: 1px solid #fff; line-height: 17px; }
    .thumb { flex: 1; margin: 0 3px; border: 1px solid; border-color: #fff #808080 #808080 #fff; }
    .grip { display: flex; align-items: center; justify-content: space-between; border: 1px solid #808080; }
    .grip.v { flex-direction: column; width: 7px; height: 228px; margin: 171px auto 0; padding: 5px 0; }
    .grip.v i { flex: 1; border-left: 1px dotted #345; margin: 4px 0; }
    .grip.h { width: 519px; height: 7px; padding: 0 5px; }
    .grip.h i { flex: 1; border-top: 1px dotted #345; margin: 0 4px; }
    .side { display: flex; flex-direction: column; gap: 3px; }
    .below { display: flex; flex-direction: column; align-items: center; gap: 1px; padding: 5px 1px 5px 0; flex: 1; }
    .params { display: flex; height: 65px; border: 1px solid #9a978f; border-radius: 4px; padding: 7px 8px 7px 0; }
    .rows { display: grid; grid-template-columns: 45px 202px; row-gap: 3px; padding: 6px 8px 0 4px; align-items: center; align-content: start; border-right: 1px solid #9a978f; }
    .phase { display: flex; gap: 8px; padding: 3px 8px 0 8px; align-items: flex-start; border-right: 1px solid #9a978f; }
    .phase label, .adv label { line-height: 21px; }
    .phase .field { width: 202px; }
    .adv { display: grid; grid-template-columns: 28px 41px; row-gap: 8px; padding: 3px 8px 0 27px; align-content: start; border-right: 1px solid #9a978f; }
    .marks { display: flex; flex-direction: column; line-height: 16px; padding: 1px 4px 0 3px; border-right: 1px solid #9a978f; width: 69px; }
    .m1 { color: #e01010; } .m2 { color: #0000c8; } .dm { color: #800080; }
    .run { display: flex; align-items: center; gap: 16px; flex: none; width: 97px; height: 48px; margin-left: 4px; padding-left: 9px; border: 1px solid #003c74; border-radius: 3px; background: linear-gradient(#fff, #f4f3ee 80%, #dcdad2); font-weight: bold; box-shadow: 0 1px #cde0f8; }
    .status { display: flex; gap: 3px; height: 19px; border-top: 1px solid #808080; padding-top: 1px; }
    .status div { border: 1px solid; border-color: #808080 #fff #fff #808080; padding: 0 4px; line-height: 16px; }
    .status mark { background: #ff0; }
    .demo { width: 189px; } .hint { flex: 1; } .ver { width: 50px; }
  `];
  spinner(value: string, cls: string, id: string) {
    return html`<div class="field spin ${cls}"><input id=${id} .value=${value} aria-label=${id}>
      <div><button aria-label="Больше"><svg width="9" height="5"><path d="M1 5H8L4.500 1Z"></path></svg></button><button aria-label="Меньше"><svg width="9" height="5"><path d="M1 0H8L4.500 4Z"></path></svg></button></div></div>`;
  }
  select(id: string, text: string, cls = "") {
    return html`<div class="field ${cls}"><select id=${id}><option>${text}</option></select>${dropIcon}</div>`;
  }
  render() {
    const tabs = ["Осциллограф", "Система зажигания", "Сравнение цилиндров", "Эффективность работы цилиндров", "Анализ давления в цилиндре", "Электропитание"];
    const subs = ["Эффективность", "Сжатие (дизель)", "Зубчатый диск", "Опережение"];
    const series = [["c1", "1 цил."], ["c3", "3 цил."], ["c4", "4 цил."], ["c2", "2 цил."], ["c0", "УОЗ=-4º"]];
    return html`
      <task-bar></task-bar>
      <main class="window">
        <header class="titlebar">${logo(16)}<h1>Diamag 2 (test_dpkv_aprel.dm2)</h1><span class="push"></span>
          <button aria-label="Свернуть"><svg width="14" height="12"><path d="M3 9h6v2H3Z"></path></svg></button>
          <button aria-label="Восстановить"><svg width="14" height="12"><path d="M5.500 1.500h6v5h-2M5 2.500h7M2.500 5.500h6v5h-6ZM2 6.500h7" fill="none" stroke="#000"></path></svg></button>
          <button aria-label="Закрыть"><svg width="14" height="12"><path d="M3 2l7 8m0-8l-7 8" stroke="#000" stroke-width="1.500"></path></svg></button>
        </header>
        <nav class="menu"><a href="#file">Файл</a><a href="#service">Сервис</a><a href="#windows">Окна</a><a href="#help">Помощь</a><span class="push"></span>
          <label for="order">Порядок работы цилиндров</label>${this.select("order", "1-3-4-2", "order")}${this.spinner("1", "cyl", "cyl")}</nav>
        <nav class="tabs">${tabs.map((t, i) => html`<button class=${classMap({ active: i === 3 })}>${t}</button>`)}</nav>
        <div class="toolbar">
          ${toolIcons.map((t) => t ? html`<button class=${classMap({ tool: true, on: !!t.on })} aria-label=${t.name}><svg width="25" height="25" viewBox="0 0 25 25">${t.g}</svg></button>` : html`<span class="sep"></span>`)}
          <div class="sub">${subs.map((t, i) => html`<button class=${classMap({ active: i === 0 })}>${t}</button>`)}</div>
          <div class="rpm"><b>71</b><span>об./мин.</span></div>
        </div>
        <section class="work">
          <div>
            <trace-chart></trace-chart>
            <div class="series">${series.map(([c, t], i) => html`<label class=${c}><input type="checkbox" .checked=${i < 4}><span>${t}</span></label>`)}</div>
            <div class="scroll">
              <button aria-label="Уменьшить"><svg width="14" height="14"><circle cx="7" cy="7" r="6" fill="none" stroke="#222"></circle><path d="M4 7h6" stroke="#00a" stroke-width="2"></path></svg></button>
              <span class="zoom">1:1</span>
              <button aria-label="Увеличить"><svg width="14" height="14"><circle cx="7" cy="7" r="6" fill="none" stroke="#222"></circle><path d="M4 7h6M7 4v6" stroke="#a00" stroke-width="2"></path></svg></button>
              <button aria-label="Влево"><svg width="5" height="8"><path d="M5 0v8L0 4Z"></path></svg></button>
              <span class="thumb"></span>
              <button aria-label="Вправо"><svg width="5" height="8"><path d="M0 0v8l5-4Z"></path></svg></button>
            </div>
          </div>
          <div class="grip v"><svg width="4" height="6"><path d="M0 0v6l4-3Z" fill="#124"></path></svg><i></i><svg width="4" height="6"><path d="M0 0v6l4-3Z" fill="#124"></path></svg></div>
          <div class="side">
            <bar-panel heading="Ускорение на холостых %" .values=${[83, 21, 79, 100]} focused marks></bar-panel>
            <bar-panel heading="Ускорение под нагрузкой %" .values=${[85, 61, 100, 89]}></bar-panel>
            <bar-panel heading="Относительная компрессия %" .values=${[100, 80, 81, 63]} .full=${9} .left=${21} .bottom=${135}></bar-panel>
          </div>
        </section>
        <section class="below">
          <div class="grip h"><svg width="6" height="4"><path d="M0 0h6L3 4Z" fill="#124"></path></svg><i></i><svg width="6" height="4"><path d="M0 0h6L3 4Z" fill="#124"></path></svg></div>
          <div class="params">
            <div class="rows"><label for="sync">Синхро:</label>${this.select("sync", "4.\u00a0 Датчик синхронизации")}<label for="sig">Сигнал:</label>${this.select("sig", "2.\u00a0 Датчик Полож Коленчатого Вал")}</div>
            <div class="phase"><label for="phase">Фаза</label>${this.select("phase", "Нет")}</div>
            <div class="adv"><label for="adv">УОЗ</label>${this.spinner("-10", "", "adv")}<span>60-2</span></div>
            <div class="marks"><span class="m1">M1=0.19</span><span class="m2">M2=26.81</span><span class="dm">ΔM1=26.62</span></div>
            <button class="run"><svg width="12" height="20" aria-hidden="true"><path d="M1 1v18l9-9Z" fill="#0f0" stroke="#484"></path></svg>Анализ</button>
          </div>
        </section>
        <footer class="status"><div class="demo">Демо версия</div><div class="hint"><mark>Увеличение (зум) с CTRL - по гориз. и верт., без CTRL - по гориз.</mark></div><div class="ver">1.9</div></footer>
      </main>`;
  }
}
